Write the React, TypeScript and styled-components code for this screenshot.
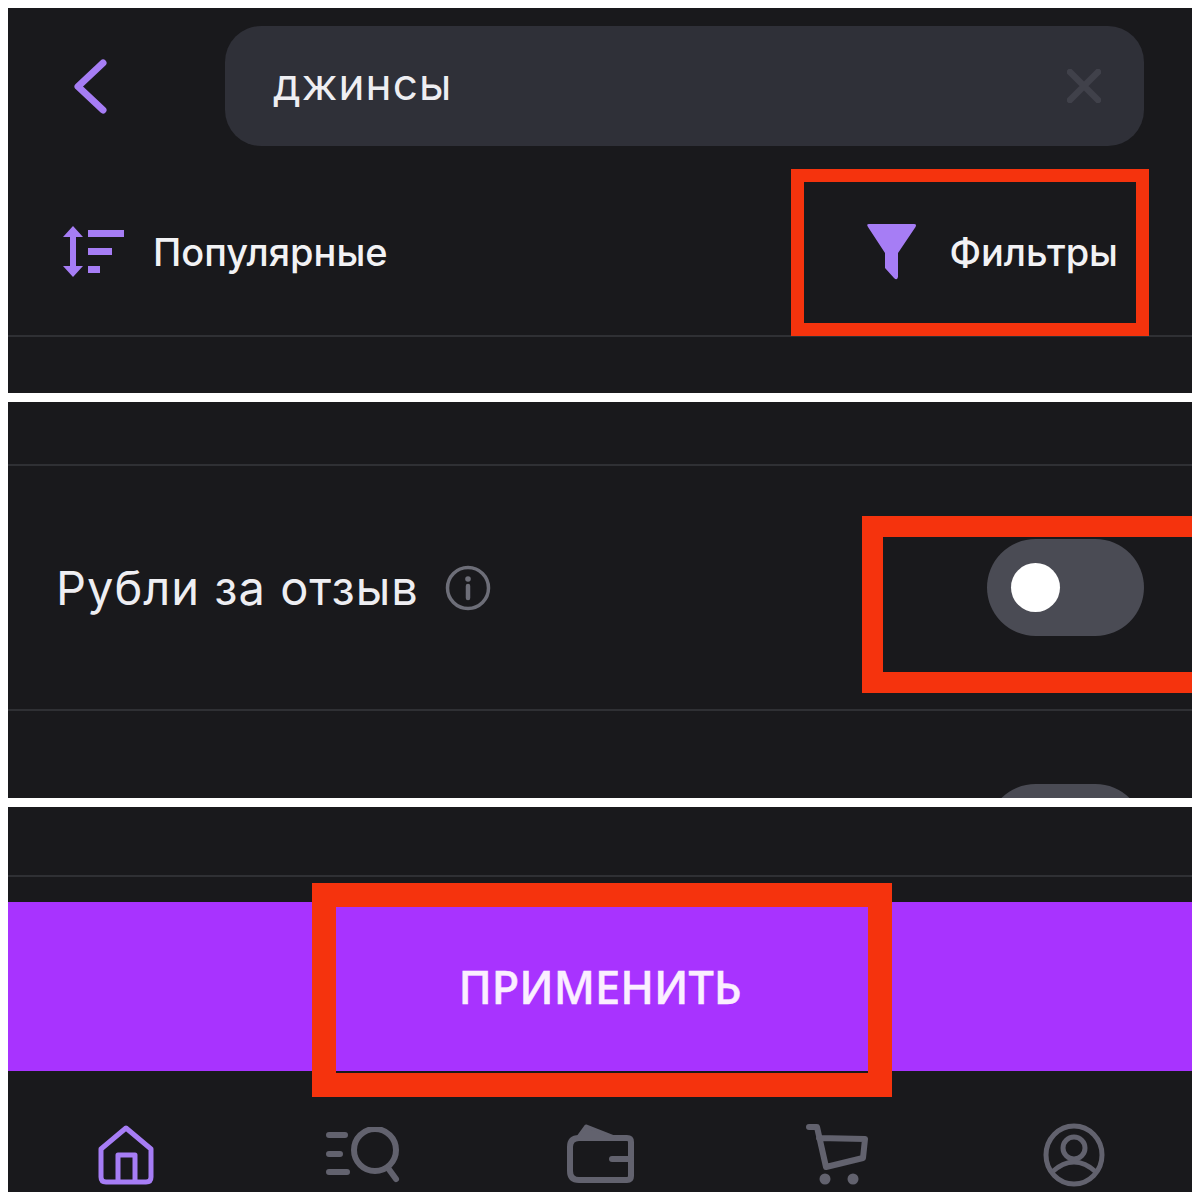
import React from "react";
import styled, { createGlobalStyle } from "styled-components";

const GlobalStyle = createGlobalStyle`
  html, body {
    margin: 0;
    background: #fff;
  }
  body {
    padding: 8px;
    font-family: Inter, "Noto Sans", "Liberation Sans", sans-serif;
  }
`;

const ACCENT = "#a67df5";
const MUTED = "#62626e";

const BackIcon = () => (
  <svg width="36" height="56" viewBox="0 0 36 56" fill="none">
    <path d="M30 5 L5 28.5 L30 52" stroke={ACCENT} strokeWidth="7" strokeLinecap="round" strokeLinejoin="round" />
  </svg>
);

const ClearIcon = () => (
  <svg width="34" height="34" viewBox="0 0 34 34" fill="none">
    <path d="M3 3 L31 31 M31 3 L3 31" stroke="#40414a" strokeWidth="6.5" strokeLinecap="round" />
  </svg>
);

const SortIcon = () => (
  <svg width="64" height="52" viewBox="0 0 64 52" fill={ACCENT}>
    <path d="M11 0 L21 11 L14 11 L14 40 L21 40 L11 51 L1 40 L8 40 L8 11 L1 11 Z" />
    <rect x="26" y="4" width="36" height="7" />
    <rect x="26" y="22" width="24" height="7" />
    <rect x="26" y="40" width="12" height="7" />
  </svg>
);

const FunnelIcon = () => (
  <svg width="50" height="56" viewBox="0 0 50 56" fill={ACCENT}>
    <path d="M2 0 L47 0 Q50 0 48.5 3 L31 29 L31 53 Q30 57 27 54 L18 44 L18 29 L1 3 Q-1 0 2 0 Z" />
  </svg>
);

const InfoIcon = () => (
  <svg width="46" height="46" viewBox="0 0 46 46" fill="none">
    <circle cx="23" cy="23" r="20.5" stroke="#6d6e78" strokeWidth="3.5" />
    <circle cx="23" cy="14" r="2.8" fill="#6d6e78" />
    <path d="M23 21 L23 33" stroke="#6d6e78" strokeWidth="4.5" strokeLinecap="round" />
  </svg>
);

const HomeIcon = () => (
  <svg width="56" height="60" viewBox="0 0 56 60" fill="none" stroke={ACCENT} strokeWidth="5" strokeLinejoin="round">
    <path d="M28 3 L53 24 L53 52 Q53 57 48 57 L8 57 Q3 57 3 52 L3 24 Z" />
    <path d="M20 57 L20 30 L37 30 L37 57" />
  </svg>
);

const CatalogIcon = () => (
  <svg width="74" height="56" viewBox="0 0 74 56" fill="none" stroke={MUTED} strokeWidth="6" strokeLinecap="round">
    <path d="M3 8 L19 8 M3 27 L14 27 M3 45 L21 45" />
    <circle cx="49" cy="23" r="21" />
    <path d="M62 41 L70 52" />
  </svg>
);

const WalletIcon = () => (
  <svg width="68" height="64" viewBox="0 0 68 64" fill="none" stroke={MUTED} strokeWidth="6" strokeLinejoin="round" strokeLinecap="round">
    <path d="M13 15 L61 15 Q65 15 65 19 L65 53 Q65 57 61 57 L13 57 Q4 57 4 48 L4 24 Q4 15 13 15 Z" />
    <path d="M46 36 L65 36" />
    <path d="M12 14 L20 3 L48 14 Z" fill={MUTED} strokeWidth="3" />
  </svg>
);

const CartIcon = () => (
  <svg width="62" height="62" viewBox="0 0 62 62" fill="none" stroke={MUTED} strokeWidth="6" strokeLinejoin="round" strokeLinecap="round">
    <path d="M3 3 L11 3 L20 43 L57 34 L59 15 L13 14" />
    <circle cx="19" cy="55" r="5.5" fill={MUTED} stroke="none" />
    <circle cx="47" cy="55" r="5.5" fill={MUTED} stroke="none" />
  </svg>
);

const ProfileIcon = () => (
  <svg width="62" height="64" viewBox="0 0 62 64" fill="none" stroke={MUTED} strokeWidth="5">
    <ellipse cx="31" cy="32" rx="28" ry="29" />
    <circle cx="31" cy="25" r="11" />
    <path d="M9 49 Q20 39 31 39 Q42 39 53 49" />
  </svg>
);

export default function App() {
  return (
    <>
      <GlobalStyle />
      <Page>
        <Panel $height={385}>
          <SearchHeader>
            <BackSlot>
              <BackIcon />
            </BackSlot>
            <SearchBar>
              <SearchText>джинсы</SearchText>
              <ClearIcon />
            </SearchBar>
          </SearchHeader>
          <SortRow>
            <SortGroup $gap={27}>
              <SortIcon />
              <RowLabel>Популярные</RowLabel>
            </SortGroup>
            <SortGroup $gap={32}>
              <FunnelIcon />
              <RowLabel>Фильтры</RowLabel>
            </SortGroup>
            <Highlight $top={0} $left={783} $width={358} $height={167} $bw="13px" />
          </SortRow>
        </Panel>

        <Panel $height={396}>
          <TopSpacer $height={64} />
          <ToggleRow>
            <ToggleLabel>
              <LabelText>Рубли за отзыв</LabelText>
              <InfoIcon />
            </ToggleLabel>
            <Toggle>
              <Knob />
            </Toggle>
            <Highlight $top={50} $left={854} $width={340} $height={177} $bw="21px 6px 21px 21px" />
          </ToggleRow>
          <NextToggle />
        </Panel>

        <Panel $height={385}>
          <TopSpacer $height={70} $below={25} />
          <ApplyBar>
            ПРИМЕНИТЬ
            <Highlight $top={-19} $left={304} $width={580} $height={214} $bw="24px" />
          </ApplyBar>
          <TabBar>
            <Tab><HomeIcon /></Tab>
            <Tab><CatalogIcon /></Tab>
            <Tab><WalletIcon /></Tab>
            <Tab><CartIcon /></Tab>
            <Tab><ProfileIcon /></Tab>
          </TabBar>
        </Panel>
      </Page>
    </>
  );
}

const Page = styled.div`
  display: flex;
  flex-direction: column;
  gap: 9px;
  width: 1184px;
`;

const Panel = styled.section<{ $height: number }>`
  position: relative;
  height: ${(p) => p.$height}px;
  background: #19191c;
  overflow: hidden;
`;

const SearchHeader = styled.div`
  display: flex;
  align-items: center;
  padding: 18px 48px 0 65px;
`;

const BackSlot = styled.div`
  display: flex;
  width: 152px;
`;

const SearchBar = styled.div`
  flex: 1;
  height: 120px;
  display: flex;
  align-items: center;
  justify-content: space-between;
  padding: 0 43px 0 48px;
  border-radius: 36px;
  background: #2f3038;
`;

const SearchText = styled.span`
  padding-bottom: 4px;
  font-size: 44px;
  color: #eeeef2;
  letter-spacing: 1.1px;
`;

const SortRow = styled.div`
  position: relative;
  height: 166px;
  margin-top: 23px;
  padding: 0 74px 0 54px;
  display: flex;
  align-items: center;
  justify-content: space-between;
  border-bottom: 2px solid #2f3034;
`;

const SortGroup = styled.div<{ $gap: number }>`
  display: flex;
  align-items: center;
  gap: ${(p) => p.$gap}px;
`;

const RowLabel = styled.span`
  font-size: 38px;
  font-weight: 500;
  color: #f2f2f4;
`;

const TopSpacer = styled.div<{ $height: number; $below?: number }>`
  height: ${(p) => p.$height}px;
  border-bottom: 2px solid #2f3034;
  box-sizing: border-box;
  margin-bottom: ${(p) => p.$below ?? 0}px;
`;

const ToggleRow = styled.div`
  position: relative;
  height: 243px;
  padding: 0 48px 0 48px;
  display: flex;
  align-items: center;
  justify-content: space-between;
  border-bottom: 2px solid #2f3034;
`;

const ToggleLabel = styled.div`
  display: flex;
  align-items: center;
  gap: 26px;
`;

const LabelText = styled.span`
  font-size: 47px;
  letter-spacing: 1px;
  color: #eeeef2;
`;

const Toggle = styled.div`
  width: 157px;
  height: 97px;
  padding-left: 24px;
  box-sizing: border-box;
  display: flex;
  align-items: center;
  border-radius: 49px;
  background: #4a4b54;
`;

const Knob = styled.div`
  width: 49px;
  height: 49px;
  border-radius: 50%;
  background: #fff;
`;

const NextToggle = styled.div`
  width: 157px;
  height: 97px;
  margin: 73px 48px 0 auto;
  border-radius: 49px;
  background: #4a4b54;
`;

const ApplyBar = styled.div`
  position: relative;
  height: 169px;
  display: flex;
  align-items: center;
  justify-content: center;
  background: #a833ff;
  color: #fbefff;
  font-size: 45px;
  font-weight: 500;
  -webkit-text-stroke: 0.5px #fbefff;
  font-family: "Noto Sans", Inter, sans-serif;
`;

const TabBar = styled.nav`
  display: grid;
  grid-template-columns: repeat(5, 1fr);
  height: 121px;
  padding-top: 52px;
  box-sizing: border-box;
`;

const Tab = styled.div`
  display: flex;
  justify-content: center;
  align-items: center;
  height: 64px;
`;

// red annotation frame drawn over the screenshot
const Highlight = styled.div<{
  $top: number;
  $left: number;
  $width: number;
  $height: number;
  $bw: string;
}>`
  position: absolute;
  top: ${(p) => p.$top}px;
  left: ${(p) => p.$left}px;
  width: ${(p) => p.$width}px;
  height: ${(p) => p.$height}px;
  box-sizing: border-box;
  border: solid #f5330d;
  border-width: ${(p) => p.$bw};
`;
